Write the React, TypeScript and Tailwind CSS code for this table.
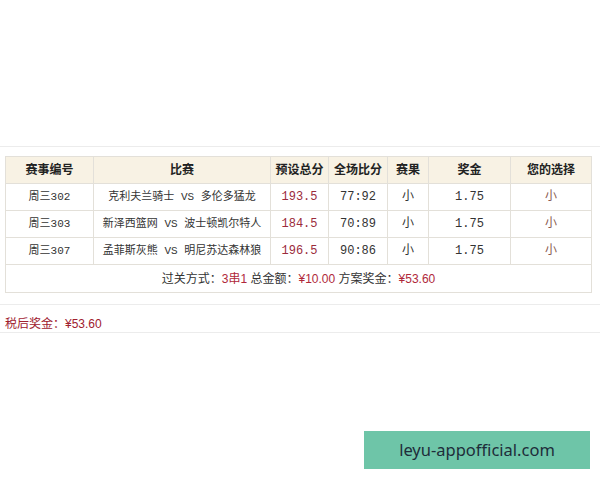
import React from "react";

const mono = { fontFamily: '"Liberation Mono", "Noto Sans CJK SC", monospace' };
const sans = { fontFamily: '"Liberation Sans", "Noto Sans CJK SC", sans-serif' };

const rows = [
  { id: "302", a: "克利夫兰骑士", b: "多伦多猛龙", pre: "193.5", score: "77:92", res: "小", odds: "1.75", pick: "小" },
  { id: "303", a: "新泽西篮网", b: "波士顿凯尔特人", pre: "184.5", score: "70:89", res: "小", odds: "1.75", pick: "小" },
  { id: "307", a: "孟菲斯灰熊", b: "明尼苏达森林狼", pre: "196.5", score: "90:86", res: "小", odds: "1.75", pick: "小" },
];

const cell = "border border-[#e3e0d9] text-center p-0";

export default function App() {
  return (
    <div className="w-[600px] h-[480px] bg-white relative overflow-hidden text-[12px] text-[#333]" style={mono}>
      <div className="h-[146px]" />
      <div className="h-px bg-[#ececec]" />
      <div className="pt-[9px] pl-[5px]">
        <table className="border-collapse table-fixed w-[586px] border border-[#e3e0d9]">
          <colgroup>
            <col className="w-[88px]" />
            <col className="w-[177px]" />
            <col className="w-[58px]" />
            <col className="w-[59px]" />
            <col className="w-[41px]" />
            <col className="w-[82px]" />
            <col className="w-[81px]" />
          </colgroup>
          <thead>
            <tr className="h-[27px] bg-[#f8f2e4] text-[#222]" style={sans}>
              {["赛事编号", "比赛", "预设总分", "全场比分", "赛果", "奖金", "您的选择"].map((h) => (
                <th key={h} className={cell + " font-bold"}>{h}</th>
              ))}
            </tr>
          </thead>
          <tbody>
            {rows.map((r) => (
              <tr key={r.id} className="h-[27px]">
                <td className={cell + " text-[11px]"}>周三{r.id}</td>
                <td className={cell + " text-[11px] whitespace-nowrap"}>
                  {r.a} VS {r.b}
                </td>
                <td className={cell + " text-[#9b2b3b]"}>{r.pre}</td>
                <td className={cell}>{r.score}</td>
                <td className={cell}>{r.res}</td>
                <td className={cell}>{r.odds}</td>
                <td className={cell + " text-[#8a5a50]"}>{r.pick}</td>
              </tr>
            ))}
            <tr className="h-[28px]" style={sans}>
              <td colSpan={7} className={cell}>
                过关方式：<span className="text-[#b0283a]">3串1</span> 总金额：<span className="text-[#b0283a]">¥10.00</span> 方案奖金：<span className="text-[#b0283a]">¥53.60</span>
              </td>
            </tr>
          </tbody>
        </table>
      </div>
      <div className="h-[11px]" />
      <div className="h-px bg-[#ececec]" />
      <div className="h-[27px] pl-[5px] pt-[10px] flex items-center text-[#a0202e]" style={sans}>
        <span>税后奖金：¥53.60</span>
      </div>
      <div className="h-px bg-[#ececec]" />
      <div className="absolute left-[364px] top-[431px] w-[226px] h-[38px] bg-[#6ec5a8] flex items-center justify-center text-[16.5px] text-[#1e2d3a]" style={{ fontFamily: '"Noto Sans", sans-serif' }}>
        leyu-appofficial.com
      </div>
    </div>
  );
}
